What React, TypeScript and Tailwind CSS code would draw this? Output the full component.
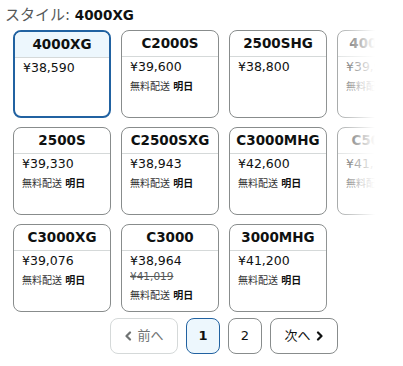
import React from 'react';

interface Variant {
  name: string;
  price: string;
  listPrice?: string;
  shipping?: boolean;
  selected?: boolean;
}

const variants: Variant[] = [
  { name: '4000XG', price: '38,590', selected: true },
  { name: 'C2000S', price: '39,600', shipping: true },
  { name: '2500SHG', price: '38,800' },
  { name: '4000MHG', price: '39,960', shipping: true },
  { name: '2500S', price: '39,330', shipping: true },
  { name: 'C2500SXG', price: '38,943', shipping: true },
  { name: 'C3000MHG', price: '42,600', shipping: true },
  { name: 'C5000XG', price: '41,580', shipping: true },
  { name: 'C3000XG', price: '39,076', shipping: true },
  { name: 'C3000', price: '38,964', listPrice: '41,019', shipping: true },
  { name: '3000MHG', price: '41,200', shipping: true },
];

function Chevron({ dir }: { dir: 'left' | 'right' }) {
  return (
    <svg width="8" height="10" viewBox="0 0 8 10" className="shrink-0">
      <path
        d={dir === 'left' ? 'M6 1.5 L2.5 5 L6 8.5' : 'M2 1.5 L5.5 5 L2 8.5'}
        fill="none"
        stroke="currentColor"
        strokeWidth="2.2"
        strokeLinecap="round"
        strokeLinejoin="round"
      />
    </svg>
  );
}

function VariantCard({ v }: { v: Variant }) {
  return (
    <div
      className={`h-[88px] rounded-[8px] overflow-hidden bg-white ${
        v.selected ? 'border-2 border-[#2162a1]' : 'border border-[#888c8c]'
      }`}
    >
      <div
        className={`h-[26px] flex items-center justify-center border-b border-[#d5d9d9] text-[13.5px] font-bold text-[#0f1111] ${
          v.selected ? 'bg-[#edf7fd]' : ''
        }`}
      >
        {v.name}
      </div>
      <div className="px-2 pt-[2px]">
        <div className="text-[12.5px] leading-[16px] text-[#0f1111]">¥{v.price}</div>
        {v.listPrice && (
          <div className="text-[10.5px] leading-[14px] text-[#565959] line-through">¥{v.listPrice}</div>
        )}
        {v.shipping && (
          <div className={`${v.listPrice ? 'mt-[6px]' : 'mt-[5px]'} text-[10px] leading-[14px] text-[#333]`}>
            無料配送 <span className="font-bold text-[#0f1111]">明日</span>
          </div>
        )}
      </div>
    </div>
  );
}

export default function App() {
  return (
    <div className="w-[403px] h-[366px] overflow-hidden bg-white font-['DejaVu_Sans','Noto_Sans_CJK_JP',sans-serif] text-[#0f1111]">
      <div className="h-[30px] pl-[5px] pt-[5px] leading-[20px]">
        <span className="text-[15px] text-[#565959]">スタイル: </span>
        <span className="text-[13.5px] font-bold">4000XG</span>
      </div>

      <div className="ml-[13px] w-[422px]">
        <div className="relative">
          <div className="grid grid-cols-[repeat(4,98px)] gap-x-[10px] gap-y-[9px]">
            {variants.map((v) => (
              <VariantCard key={v.name} v={v} />
            ))}
          </div>
          {/* fade for the scrolled-off column */}
          <div className="absolute top-0 bottom-0 left-[310px] right-0 bg-[linear-gradient(to_right,rgba(255,255,255,0)_0px,#fff_52px)]" />
        </div>

        <div className="mt-[6px] flex justify-center gap-2 text-[13px]">
          <button className="w-[68px] h-[36px] rounded-[8px] border border-[#d5d9d9] flex items-center justify-center gap-[5px] text-[#6f7373]">
            <Chevron dir="left" />
            <span>前へ</span>
          </button>
          <button className="w-[34px] h-[36px] rounded-[8px] border border-[#2162a1] bg-[#edf7fd] font-bold">1</button>
          <button className="w-[34px] h-[36px] rounded-[8px] border border-[#888c8c]">2</button>
          <button className="w-[68px] h-[36px] rounded-[8px] border border-[#888c8c] flex items-center justify-center gap-[5px]">
            <span>次へ</span>
            <Chevron dir="right" />
          </button>
        </div>
      </div>
    </div>
  );
}
